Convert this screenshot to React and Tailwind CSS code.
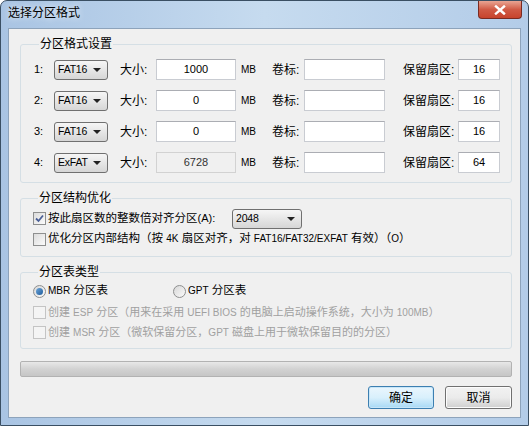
import React from 'react';

const Combo = ({ value, w }) => (
  <div
    className={`${w} h-[20px] shrink-0 flex items-center justify-between pl-[3px] pr-[6px] border border-[#707070] rounded-[3px] bg-gradient-to-b from-[#f6f6f6] via-[#e6e6e6] to-[#d6d6d6] text-[10.5px] leading-none`}
  >
    <span className="tracking-[-0.2px]">{value}</span>
    <span className="w-0 h-0 border-l-[4px] border-r-[4px] border-t-[4px] border-l-transparent border-r-transparent border-t-[#222]" />
  </div>
);

const TextBox = ({ value, w, disabled }) => (
  <div
    className={`${w} h-[21px] shrink-0 flex items-center justify-center border text-[11px] leading-none ${
      disabled
        ? 'bg-[#f0f0f0] border-[#d2d2d2] text-[#333]'
        : 'bg-white border-[#c9ccd2] border-t-[#abadb3]'
    }`}
  >
    {value}
  </div>
);

const CheckBox = ({ checked, disabled }) => (
  <span
    className={`w-[13px] h-[13px] shrink-0 flex items-center justify-center border ${
      disabled ? 'border-[#c4c4c4] bg-[#f4f4f4]' : 'border-[#8e8f8f] bg-gradient-to-br from-[#dcdcdc] to-[#fbfbfb]'
    }`}
  >
    {checked && (
      <svg width="9" height="9" viewBox="0 0 9 9">
        <path d="M1 4.5 L3.5 7 L8 1.5" fill="none" stroke="#4a5f97" strokeWidth="1.8" />
      </svg>
    )}
  </span>
);

const Radio = ({ checked }) => (
  <span className="w-[13px] h-[13px] shrink-0 rounded-full border border-[#8e8f8f] bg-gradient-to-br from-[#d8d8d8] to-[#fafafa] flex items-center justify-center">
    {checked && <span className="w-[7px] h-[7px] rounded-full bg-gradient-to-br from-[#6ea6d8] to-[#1b5b9c]" />}
  </span>
);

// latin runs render a bit smaller than the CJK glyphs in the original dialog
const L = ({ children }) => <span className="text-[10px]">{children}</span>;

const rows = [
  { n: '1:', fs: 'FAT16', size: '1000', res: '16' },
  { n: '2:', fs: 'FAT16', size: '0', res: '16' },
  { n: '3:', fs: 'FAT16', size: '0', res: '16' },
  { n: '4:', fs: 'ExFAT', size: '6728', res: '64', disabled: true },
];

export default function App() {
  return (
    <div className="w-[529px] h-[426px] bg-white font-['Liberation_Sans','Noto_Sans_CJK_SC',sans-serif] text-black">
      <div className="w-[529px] h-[426px] flex flex-col rounded-t-[7px] border border-[#3a4f63] bg-gradient-to-r from-[#a9c4e3] via-[#c6dbef] to-[#b3cce8]">
        {/* title bar */}
        <div className="h-[27px] shrink-0 flex items-start justify-between pl-[7px]">
          <span className="mt-[3px] text-[12px] leading-[18px] [text-shadow:0_0_6px_white]">选择分区格式</span>
          <div className="mr-[6px] w-[44px] h-[18px] rounded-b-[4px] border border-t-0 border-[#7a2b22] bg-gradient-to-b from-[#e8a493] via-[#d05a45] to-[#c7432c] flex items-center justify-center">
            <svg width="12" height="10" viewBox="0 0 12 10">
              <path d="M2 1.5 L10 8.5 M10 1.5 L2 8.5" stroke="white" strokeWidth="2.4" strokeLinecap="square" />
            </svg>
          </div>
        </div>

        {/* client area */}
        <div className="ml-[7px] mr-[7px] h-[390px] shrink-0 flex flex-col pl-[11px] pr-[8px] bg-[#f0f0f0] border border-[#8da3bb]">
          {/* group 1 */}
          <fieldset className="mt-[8px] h-[146px] border border-[#d5dfe5] rounded-[3px] pl-[13px]">
            <legend className="ml-[5px] px-[1px] text-[12px] leading-[14px]">分区格式设置</legend>
            <div className="mt-[8px] flex flex-col gap-[10px]">
              {rows.map((r) => (
                <div key={r.n} className="flex items-center h-[21px] text-[12px]">
                  <span className="w-[20px] shrink-0 text-[11px]">{r.n}</span>
                  <Combo value={r.fs} w="w-[54px]" />
                  <span className="ml-[12px] w-[36px] shrink-0">大小:</span>
                  <TextBox value={r.size} w="w-[80px]" disabled={r.disabled} />
                  <span className="ml-[5px] w-[31px] shrink-0 text-[10px]">MB</span>
                  <span className="w-[32px] shrink-0">卷标:</span>
                  <TextBox value="" w="w-[81px]" />
                  <span className="ml-[18px] w-[55px] shrink-0">保留扇区:</span>
                  <TextBox value={r.res} w="w-[42px]" />
                </div>
              ))}
            </div>
          </fieldset>

          {/* group 2 */}
          <fieldset className="mt-[8px] h-[66px] border border-[#d5dfe5] rounded-[3px] pl-[12px]">
            <legend className="ml-[5px] px-[1px] text-[12px] leading-[14px]">分区结构优化</legend>
            <div className="mt-[3px] flex items-center h-[21px] text-[11.5px]">
              <CheckBox checked />
              <span className="ml-[2px] w-[184px] shrink-0">
                按此扇区数的整数倍对齐分区<span className="text-[11px]">(A):</span>
              </span>
              <Combo value="2048" w="w-[70px]" />
            </div>
            <div className="mt-[1px] flex items-center h-[18px] text-[11.5px]">
              <CheckBox />
              <span className="ml-[2px]">
                优化分区内部结构（按 <L>4K</L> 扇区对齐，对 <L>FAT16/FAT32/EXFAT</L> 有效）（<L>O</L>）
              </span>
            </div>
          </fieldset>

          {/* group 3 */}
          <fieldset className="mt-[8px] h-[84px] border border-[#d5dfe5] rounded-[3px] pl-[12px]">
            <legend className="ml-[5px] px-[1px] text-[12px] leading-[14px]">分区表类型</legend>
            <div className="mt-[3px] flex items-center h-[18px] text-[11.5px]">
              <Radio checked />
              <span className="ml-[2px] w-[125px] shrink-0">
                <L>MBR</L> 分区表
              </span>
              <Radio />
              <span className="ml-[2px]">
                <L>GPT</L> 分区表
              </span>
            </div>
            <div className="mt-[3px] flex items-center h-[18px] text-[11px] text-[#a0a0a0]">
              <CheckBox disabled />
              <span className="ml-[2px]">
                创建 <L>ESP</L> 分区（用来在采用 <L>UEFI BIOS</L> 的电脑上启动操作系统，大小为 <L>100MB</L>）
              </span>
            </div>
            <div className="mt-[2px] flex items-center h-[18px] text-[11px] text-[#a0a0a0]">
              <CheckBox disabled />
              <span className="ml-[2px]">
                创建 <L>MSR</L> 分区（微软保留分区，<L>GPT</L> 磁盘上用于微软保留目的的分区）
              </span>
            </div>
          </fieldset>

          {/* progress */}
          <div className="mt-[12px] h-[16px] rounded-[2px] border border-[#b2b2b2] bg-gradient-to-b from-[#e8e8e8] via-[#d2d2d2] to-[#c6c6c6]" />

          {/* buttons */}
          <div className="mt-[9px] flex justify-end gap-[11px] text-[12px]">
            <button className="w-[66px] h-[23px] rounded-[3px] border border-[#3c7fb1] bg-gradient-to-b from-[#eaf6fd] via-[#d9f0fc] to-[#a7d9f5] shadow-[inset_0_0_0_1px_#c8e6f8]">
              确定
            </button>
            <button className="w-[67px] h-[23px] rounded-[3px] border border-[#707070] bg-gradient-to-b from-[#f2f2f2] via-[#ebebeb] to-[#cfcfcf] shadow-[inset_0_0_0_1px_#fcfcfc]">
              取消
            </button>
          </div>
        </div>
      </div>
    </div>
  );
}
